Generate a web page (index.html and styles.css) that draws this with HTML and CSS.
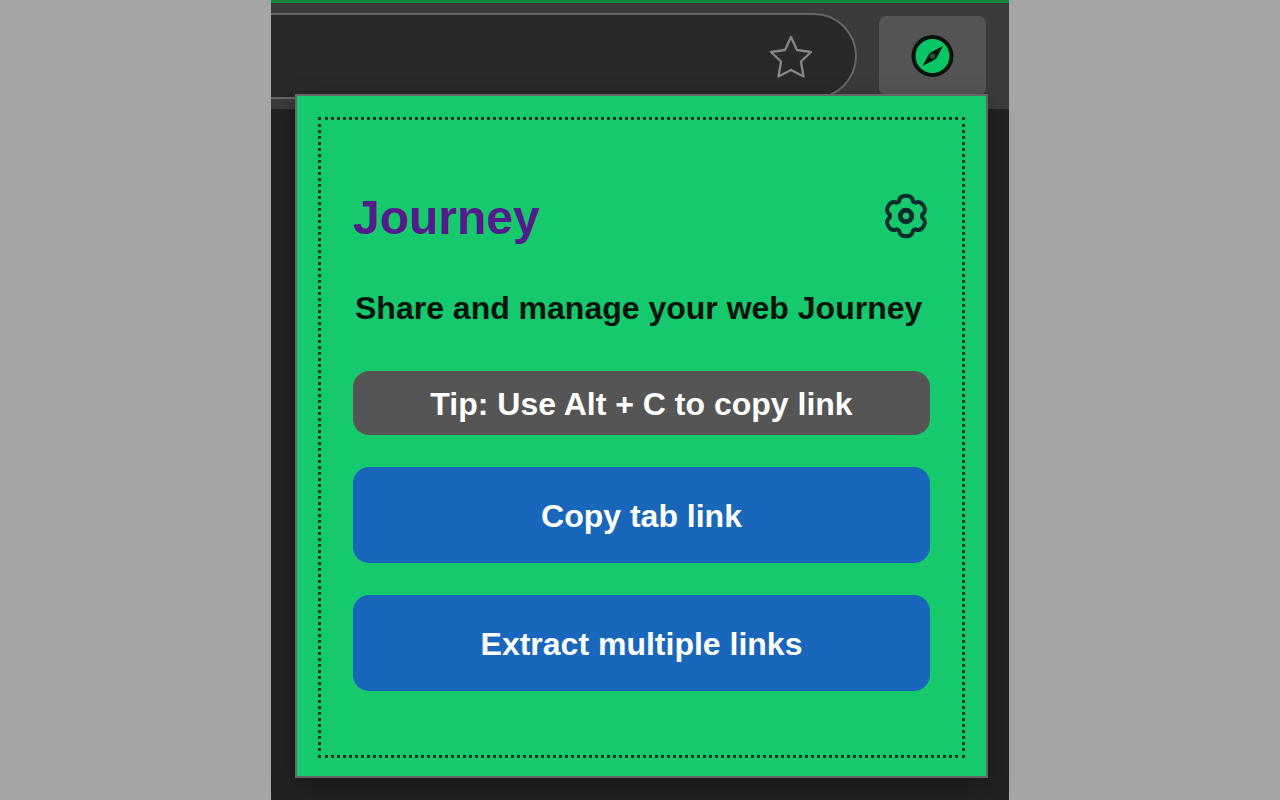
FILE: index.html
```html
<!DOCTYPE html>
<html lang="en">
<head>
  <meta charset="utf-8">
  <meta name="viewport" content="width=device-width, initial-scale=1">
  <title>Journey</title>
  <link rel="stylesheet" href="styles.css">
</head>
<body>
  <div class="browser">
    <header class="toolbar">
      <div class="address">
        <input class="address-input" type="text" aria-label="Address">
        <button class="star" type="button" aria-label="Bookmark this page">
          <svg width="48" height="48" viewBox="0 0 48 48" fill="none" stroke="#858585" stroke-width="2.400" stroke-linejoin="round">
            <path d="M24 5 L30 18 L44 20 L34 29.500 L36.500 44.500 L24 38 L11.500 44.500 L14 29.500 L4 20 L18 18 Z"/>
          </svg>
        </button>
      </div>
      <button class="extension" type="button" aria-label="Journey extension">
        <svg width="44" height="44" viewBox="0 0 44 44">
          <circle cx="21.500" cy="22" r="19" fill="#08c566" stroke="#07120d" stroke-width="4"/>
          <path d="M32 12 L25.500 24 Q24.500 25.500 23 26 L11.500 32 L18 20 Q19 18.500 20.500 18 Z" fill="#07120d"/>
          <circle cx="21.500" cy="22" r="2.800" fill="#0b5c39"/>
        </svg>
      </button>
    </header>
    <main class="popup">
      <div class="panel">
        <div class="heading">
          <h1 class="title"><a href="#">Journey</a></h1>
          <button class="settings" type="button" aria-label="Settings">
            <svg width="48" height="48" viewBox="-72 -72 144 144" fill="none" stroke="#062c2e" stroke-width="12" stroke-linecap="round">
              <defs>
                <path id="lobe" d="M-24 -41.600 C-20 -43.900 -21 -44 -20 -46 C-20 -56 -11 -61 0 -61 C11 -61 20 -56 20 -46 C21 -44 20 -43.900 24 -41.600"/>
              </defs>
              <use href="#lobe"/>
              <use href="#lobe" transform="rotate(60)"/>
              <use href="#lobe" transform="rotate(120)"/>
              <use href="#lobe" transform="rotate(180)"/>
              <use href="#lobe" transform="rotate(240)"/>
              <use href="#lobe" transform="rotate(300)"/>
              <circle r="17" stroke-width="15"/>
            </svg>
          </button>
        </div>
        <p class="intro">Share and manage your web Journey</p>
        <div class="stack">
          <p class="tip">Tip: Use Alt + C to copy link</p>
          <button class="action" type="button">Copy tab link</button>
          <button class="action" type="button">Extract multiple links</button>
        </div>
      </div>
    </main>
  </div>
</body>
</html>
```
FILE: styles.css
```css
* {
  box-sizing: border-box;
}

body {
  margin: 0;
  background: #a5a5a5;
  font-family: "Liberation Sans", Arial, sans-serif;
  font-size: 32px;
  font-weight: 700;
  line-height: 40px;
}

h1,
p {
  margin: 0;
}

button,
input {
  margin: 0;
  padding: 0;
  border: 0;
  background: none;
  font: inherit;
  color: inherit;
}

svg {
  display: block;
}

.browser {
  max-width: 738px;
  min-height: 100vh;
  margin: 0 auto;
  padding-bottom: 22px;
  background: #222222;
}

.toolbar {
  display: flex;
  align-items: flex-start;
  gap: 22px;
  padding: 10px 23px 10px 0;
  border-top: 3px solid #168540;
  background: #3b3b3b;
}

.address {
  display: flex;
  flex: 1;
  align-items: center;
  height: 86px;
  padding-right: 40px;
  border: 2px solid #666666;
  border-left: 0;
  border-radius: 0 43px 43px 0;
  background: #292929;
}

.address-input {
  flex: 1;
  min-width: 0;
  height: 48px;
  padding: 0 24px;
  color: #eeeeee;
  outline: none;
}

.extension {
  display: grid;
  place-items: center;
  width: 107px;
  height: 80px;
  margin-top: 3px;
  border-radius: 8px;
  background: #545454;
}

.popup {
  position: relative;
  margin: -15px 21px 0 24px;
  padding: 21px 21px 18px;
  border: 2px solid #666666;
  background: #16c96c;
  box-shadow: 0 8px 24px rgba(0, 0, 0, 0.3);
}

.panel {
  padding: 68px 32px 64px;
  border: 3px dotted #07391f;
}

.heading {
  display: flex;
  align-items: center;
  justify-content: space-between;
  margin-bottom: 44px;
}

.title {
  padding-top: 4px;
  font-size: 48px;
  line-height: 52px;
}

.title a {
  color: #551a8b;
  text-decoration: none;
}

.intro {
  margin-bottom: 43px;
  padding-left: 2px;
  color: #02130c;
}

.stack {
  display: grid;
  gap: 32px;
}

.tip {
  padding: 13px 16px 11px;
  border-radius: 16px;
  background: #555555;
  color: #ffffff;
  text-align: center;
}

.action {
  padding: 29px 16px 27px;
  border-radius: 16px;
  background: #1967ba;
  color: #ffffff;
}
```
